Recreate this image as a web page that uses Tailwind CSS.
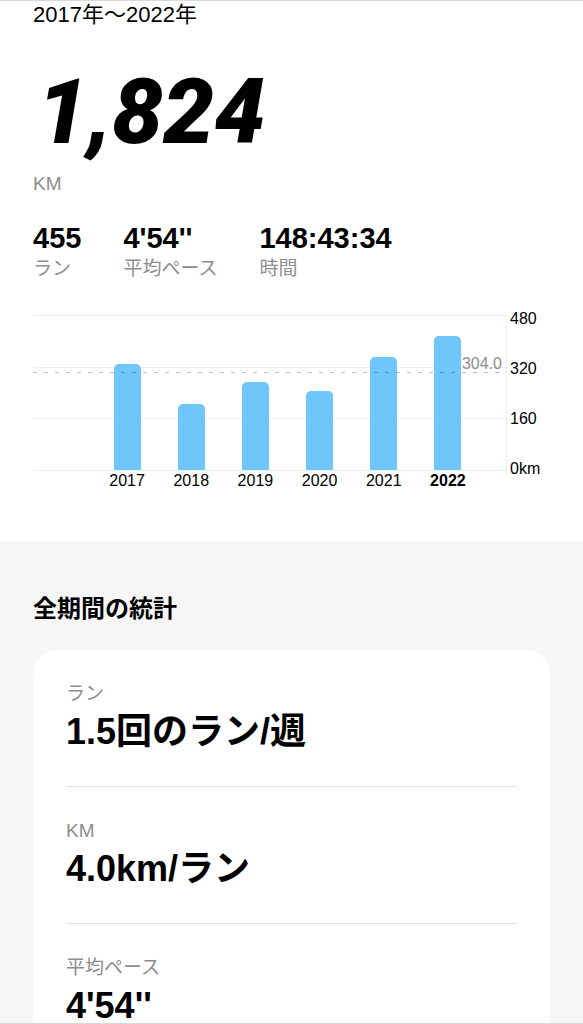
<!DOCTYPE html>
<html lang="ja">
<head>
  <meta charset="UTF-8">
  <meta name="viewport" content="width=device-width, initial-scale=1.0">
  <title>ランの統計</title>
  <script src="https://cdn.jsdelivr.net/npm/@tailwindcss/browser@4"></script>
</head>
<body class="flex flex-col h-screen overflow-hidden bg-white text-black border-y border-[#d9d9d9] font-['Liberation_Sans','Noto_Sans_CJK_JP',sans-serif]">

  <section class="px-[33px] pb-[52px]">
    <p class="text-[22px] leading-[28px]">2017年〜2022年</p>

    <h1 class="mt-[33px] pl-1 font-['Roboto'] font-black italic text-[91px] leading-[100px]">1,824</h1>
    <p class="mt-[10px] text-[19px] leading-[24px] text-[#8d8d8d]">KM</p>

    <dl class="mt-[23px] flex gap-[42px]">
      <div class="flex flex-col-reverse">
        <dt class="text-[19px] leading-[24px] text-[#8d8d8d]">ラン</dt>
        <dd class="text-[29px] leading-[38px] font-bold">455</dd>
      </div>
      <div class="flex flex-col-reverse">
        <dt class="text-[19px] leading-[24px] text-[#8d8d8d]">平均ペース</dt>
        <dd class="text-[29px] leading-[38px] font-bold">4'54''</dd>
      </div>
      <div class="flex flex-col-reverse">
        <dt class="text-[19px] leading-[24px] text-[#8d8d8d]">時間</dt>
        <dd class="text-[29px] leading-[38px] font-bold">148:43:34</dd>
      </div>
    </dl>

    <!-- chart -->
    <div class="mt-[34px] flex text-[16px] leading-[16px]">
      <div class="flex-1">
        <div class="relative h-[156px] border-r border-[#efefef]">
          <!-- grid lines -->
          <div class="absolute inset-0 flex flex-col justify-between">
            <div class="h-px bg-[#efefef]"></div>
            <div class="h-px bg-[#efefef]"></div>
            <div class="h-px bg-[#efefef]"></div>
            <div class="h-px bg-[#efefef]"></div>
          </div>
          <!-- bars -->
          <div class="relative h-full grid grid-cols-6 items-end justify-items-center pl-[62px] pr-[27px] pb-px">
            <div class="w-[27px] rounded-t-[5px] bg-[#6ec6fa]" style="height: 106px"></div>
            <div class="w-[27px] rounded-t-[5px] bg-[#6ec6fa]" style="height: 66px"></div>
            <div class="w-[27px] rounded-t-[5px] bg-[#6ec6fa]" style="height: 88px"></div>
            <div class="w-[27px] rounded-t-[5px] bg-[#6ec6fa]" style="height: 79px"></div>
            <div class="w-[27px] rounded-t-[5px] bg-[#6ec6fa]" style="height: 113px"></div>
            <div class="w-[27px] rounded-t-[5px] bg-[#6ec6fa]" style="height: 134px"></div>
          </div>
          <!-- average -->
          <div class="absolute inset-x-0 bottom-[98px] h-px bg-[repeating-linear-gradient(to_right,rgba(0,0,0,0.25)_0_4px,transparent_4px_11px)]"></div>
          <span class="absolute right-[4px] bottom-[99px] text-[#8d8d8d]">304.0</span>
        </div>
        <div class="mt-[2px] grid grid-cols-6 justify-items-center pl-[62px] pr-[27px]">
          <span>2017</span>
          <span>2018</span>
          <span>2019</span>
          <span>2020</span>
          <span>2021</span>
          <span class="font-bold">2022</span>
        </div>
      </div>
      <div class="-mt-1 w-[43px] h-[166px] pl-[3px] flex flex-col justify-between">
        <span>480</span>
        <span>320</span>
        <span>160</span>
        <span>0km</span>
      </div>
    </div>
  </section>

  <section class="flex-1 min-h-0 bg-[#f6f6f6] px-[33px] pt-[51px]">
    <h2 class="text-[24px] leading-[34px] font-bold">全期間の統計</h2>

    <dl class="mt-[24px] bg-white rounded-[24px] px-[33px] divide-y divide-[#e3e3e3]">
      <div class="py-8">
        <dt class="text-[19px] leading-[24px] text-[#8d8d8d]">ラン</dt>
        <dd class="mt-1 text-[36px] leading-[44px] font-bold">1.5回のラン/週</dd>
      </div>
      <div class="py-8">
        <dt class="text-[19px] leading-[24px] text-[#8d8d8d]">KM</dt>
        <dd class="mt-1 text-[36px] leading-[44px] font-bold">4.0km/ラン</dd>
      </div>
      <div class="py-8">
        <dt class="text-[19px] leading-[24px] text-[#8d8d8d]">平均ペース</dt>
        <dd class="mt-1 text-[36px] leading-[44px] font-bold">4'54''</dd>
      </div>
    </dl>
  </section>

</body>
</html>
